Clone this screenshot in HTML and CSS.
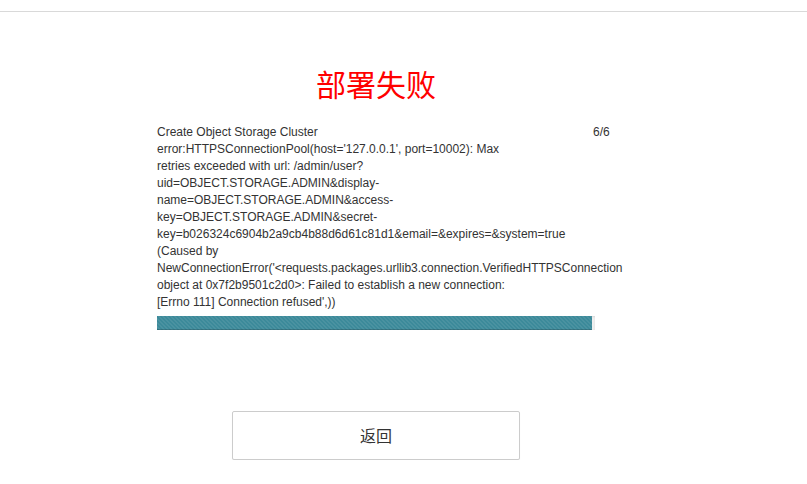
FILE: index.html
```html
<!DOCTYPE html>
<html lang="zh-CN">
<head>
<meta charset="utf-8">
<title>部署失败</title>
<link rel="stylesheet" href="styles.css">
</head>
<body>
<div class="topbar"></div>
<div class="main">
  <h1 class="title">部署失败</h1>
  <div class="task">
    <div class="row">
      <div class="msg">Create Object Storage Cluster error:HTTPSConnectionPool(host='127.0.0.1', port=10002): Max retries exceeded with url: /admin/user?uid=OBJECT.STORAGE.ADMIN&amp;display-name=OBJECT.STORAGE.ADMIN&amp;access-key=OBJECT.STORAGE.ADMIN&amp;secret-key=b026324c6904b2a9cb4b88d6d61c81d1&amp;email=&amp;expires=&amp;system=true (Caused by NewConnectionError('&lt;requests.packages.urllib3.connection.VerifiedHTTPSConnection object at 0x7f2b9501c2d0&gt;: Failed to establish a new connection: [Errno 111] Connection refused',))</div>
      <div class="count">6/6</div>
    </div>
    <div class="progress"><div class="bar" style="width: 99.3%"></div></div>
  </div>
  <div class="actions">
    <button class="btn" type="button">返回</button>
  </div>
</div>
</body>
</html>
```
FILE: styles.css
```css
html, body {
  margin: 0;
  padding: 0;
  background: #fff;
}
body {
  font-family: "Liberation Sans", Arial, "Noto Sans CJK SC", sans-serif;
  color: #333;
}
.topbar {
  height: 11px;
  border-bottom: 1px solid #d9d9d9;
}
.main {
  width: 752px;
}
.title {
  margin: 51px 0 0;
  text-align: center;
  font-family: "Noto Sans CJK SC", sans-serif;
  font-weight: normal;
  font-size: 30px;
  line-height: 40px;
  color: #ff0000;
}
.task {
  width: 438px;
  margin: 21px auto 0;
}
.row {
  display: flex;
  font-size: 12px;
  line-height: 17px;
}
.msg {
  flex: none;
  width: 360px;
}
.count {
  flex: none;
  margin-left: 76px;
}
.progress {
  margin-top: 5px;
  height: 14px;
  background: #efefef;
  box-shadow: inset 0 1px 2px rgba(0, 0, 0, 0.1);
  overflow: hidden;
}
.bar {
  height: 100%;
  background-color: #3c8a9a;
  background-image: linear-gradient(45deg, rgba(255,255,255,.07) 25%, transparent 25%, transparent 50%, rgba(255,255,255,.07) 50%, rgba(255,255,255,.07) 75%, transparent 75%, transparent);
  background-size: 4px 4px;
  box-shadow: inset 0 -1px 0 rgba(0, 0, 0, 0.18);
}
.actions {
  display: flex;
  justify-content: center;
  margin-top: 81px;
}
.btn {
  width: 288px;
  height: 49px;
  background: #fff;
  border: 1px solid #ccc;
  border-radius: 2px;
  box-shadow: 0 1px 1px rgba(0, 0, 0, 0.06);
  font-family: "Noto Sans CJK SC", sans-serif;
  font-size: 16px;
  line-height: 20px;
  color: #333;
  padding: 0 0 2px;
}
```
